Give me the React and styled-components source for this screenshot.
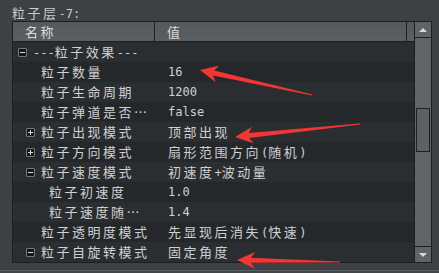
import React from "react";
import styled, { createGlobalStyle } from "styled-components";

const Global = createGlobalStyle`
  html, body { margin: 0; padding: 0; background: #3e4144; }
  body { width: 439px; height: 273px; overflow: hidden; }
`;

const Frame = styled.div`
  position: relative;
  width: 439px;
  height: 273px;
  box-sizing: border-box;
  background: #3e4144;
  padding: 4px 7px 0 12px;
  display: flex;
  flex-direction: column;
  font-family: "DejaVu Sans Mono", "Noto Sans CJK SC", monospace;
  color: #d0d0d0;
  overflow: hidden;
`;

const Title = styled.div`
  height: 17px;
  line-height: 18px;
  font-size: 12px;
  color: #c8cacb;
`;

const Panel = styled.div`
  display: grid;
  grid-template-columns: 1fr 17px;
  height: 242px;
  border: 1px solid #1d1f21;
  box-sizing: border-box;
  background: #2a2d2f;
`;

const Tree = styled.div`
  display: flex;
  flex-direction: column;
  min-width: 0;
`;

const Header = styled.div`
  display: grid;
  grid-template-columns: 142px 1fr 7px;
  height: 20px;
  box-sizing: border-box;
  border-bottom: 1px solid #1d1f21;
  background: linear-gradient(#55595c, #5b5f62);
`;

const HeadCell = styled.div`
  box-sizing: border-box;
  padding-left: ${(p) => p.$pad}px;
  border-right: ${(p) => (p.$last ? "none" : "1px solid #1d1f21")};
  line-height: 19px;
  font-size: 12px;
  color: #dadbdc;
`;

const Rows = styled.div`
  display: flex;
  flex-direction: column;
`;

const Row = styled.div`
  display: grid;
  grid-template-columns: 142px 1fr;
  height: 20px;
  line-height: 20px;
  font-size: 12px;
  white-space: nowrap;
  &:nth-child(odd) { background: #2b2e30; }
  &:nth-child(even) { background: #25282a; }
`;

const NameCell = styled.div`
  display: flex;
  align-items: center;
  padding-left: ${(p) => 5 + p.$level * 8}px;
  overflow: hidden;
`;

const BoxSlot = styled.span`
  flex: 0 0 15px;
  height: 20px;
  display: flex;
  align-items: center;
`;

const ExpandBox = styled.span`
  position: relative;
  width: 9px;
  height: 9px;
  box-sizing: border-box;
  border: 1px solid #74787b;
  border-radius: 1px;
  background: #141618;
  &::before {
    content: "";
    position: absolute;
    left: 1px;
    right: 1px;
    top: 3px;
    height: 1px;
    background: #d6d6d6;
  }
  &::after {
    content: "";
    display: ${(p) => (p.$open ? "none" : "block")};
    position: absolute;
    top: 1px;
    bottom: 1px;
    left: 3px;
    width: 1px;
    background: #d6d6d6;
  }
`;

const ValueCell = styled.div`
  padding-left: 13px;
  overflow: hidden;
`;

const Cjk = styled.span`
  font-family: "Noto Sans CJK SC", sans-serif;
  font-size: 13px;
  letter-spacing: 2.5px;
`;

const Latin = styled.span`
  font-family: "DejaVu Sans Mono", monospace;
  font-size: 12px;
`;

const Scrollbar = styled.div`
  display: flex;
  flex-direction: column;
  border-left: 1px solid #1d1f21;
  background: #5f6467;
`;

const ScrollButton = styled.div`
  height: 15px;
  flex: 0 0 15px;
  display: flex;
  align-items: center;
  justify-content: center;
  background: #5f6467;
  border-top: ${(p) => (p.$down ? "1px solid #1d1f21" : "none")};
  border-bottom: ${(p) => (p.$down ? "none" : "1px solid #1d1f21")};
`;

const Triangle = styled.span`
  width: 0;
  height: 0;
  border-left: 4px solid transparent;
  border-right: 4px solid transparent;
  ${(p) =>
    p.$down
      ? "border-top: 4px solid #d8d8d8;"
      : "border-bottom: 4px solid #d8d8d8;"}
`;

const Track = styled.div`
  flex: 1;
  padding: 70px 1px 0 1px;
`;

const Thumb = styled.div`
  height: 44px;
  box-sizing: border-box;
  border: 1px solid #1d1f21;
  background: #5c6164;
`;

const Footer = styled.div`
  margin: 7px -7px 0 -12px;
  flex: 1;
  border-top: 1px solid #5a5e61;
  background: #424548;
`;

const Overlay = styled.svg`
  position: absolute;
  left: 0;
  top: 0;
  pointer-events: none;
`;

const isCjk = (ch) => /[\u2026\u3000-\u9fff\uff00-\uffef]/.test(ch);

function Mixed({ text }) {
  const parts = [];
  let cur = "";
  let curCjk = null;
  for (const ch of text) {
    const c = isCjk(ch);
    if (curCjk === null || c === curCjk) {
      cur += ch;
    } else {
      parts.push([curCjk, cur]);
      cur = ch;
    }
    curCjk = c;
  }
  if (cur) parts.push([curCjk, cur]);
  return parts.map(([c, s], i) =>
    c ? <Cjk key={i}>{s}</Cjk> : <Latin key={i}>{s}</Latin>
  );
}

const rows = [
  { name: "---粒子效果---", value: "", level: 0, box: "open" },
  { name: "粒子数量", value: "16", level: 1 },
  { name: "粒子生命周期", value: "1200", level: 1 },
  { name: "粒子弹道是否…", value: "false", level: 1 },
  { name: "粒子出现模式", value: "顶部出现", level: 1, box: "closed" },
  { name: "粒子方向模式", value: "扇形范围方向(随机)", level: 1, box: "closed" },
  { name: "粒子速度模式", value: "初速度+波动量", level: 1, box: "open" },
  { name: "粒子初速度", value: "1.0", level: 2 },
  { name: "粒子速度随…", value: "1.4", level: 2 },
  { name: "粒子透明度模式", value: "先显现后消失(快速)", level: 1 },
  { name: "粒子自旋转模式", value: "固定角度", level: 1, box: "open" },
];

function arrowPoints(tx, ty, sx, sy) {
  const dx = tx - sx;
  const dy = ty - sy;
  const len = Math.hypot(dx, dy);
  const ux = dx / len;
  const uy = dy / len;
  const nx = -uy;
  const ny = ux;
  const headLen = 18;
  const headW = 8.5;
  const bx = tx - ux * headLen;
  const by = ty - uy * headLen;
  const nbx = tx - ux * (headLen - 4);
  const nby = ty - uy * (headLen - 4);
  const pts = [
    [sx + nx * 0.5, sy + ny * 0.5],
    [nbx + nx * 2.5, nby + ny * 2.5],
    [bx + nx * headW, by + ny * headW],
    [tx, ty],
    [bx - nx * headW, by - ny * headW],
    [nbx - nx * 2.5, nby - ny * 2.5],
    [sx - nx * 0.5, sy - ny * 0.5],
  ];
  return pts.map((p) => p.map((v) => v.toFixed(1)).join(",")).join(" ");
}

const arrows = [
  [200, 70, 312, 95],
  [235, 137, 360, 124],
  [237, 260, 340, 262],
];

export default function App() {
  return (
    <>
      <Global />
      <Frame>
        <Title>
          <Mixed text="粒子层-7:" />
        </Title>
        <Panel>
          <Tree>
            <Header>
              <HeadCell $pad={12}>
                <Mixed text="名称" />
              </HeadCell>
              <HeadCell $pad={12}>
                <Mixed text="值" />
              </HeadCell>
              <HeadCell $last />
            </Header>
            <Rows>
              {rows.map((r, i) => (
                <Row key={i}>
                  <NameCell $level={r.level}>
                    <BoxSlot>
                      {r.box && <ExpandBox $open={r.box === "open"} />}
                    </BoxSlot>
                    <span>
                      <Mixed text={r.name} />
                    </span>
                  </NameCell>
                  <ValueCell>
                    <Mixed text={r.value} />
                  </ValueCell>
                </Row>
              ))}
            </Rows>
          </Tree>
          <Scrollbar>
            <ScrollButton>
              <Triangle />
            </ScrollButton>
            <Track>
              <Thumb />
            </Track>
            <ScrollButton $down>
              <Triangle $down />
            </ScrollButton>
          </Scrollbar>
        </Panel>
        <Footer />
        <Overlay width="439" height="273" viewBox="0 0 439 273">
          {arrows.map((a, i) => (
            <polygon key={i} points={arrowPoints(...a)} fill="#f23535" />
          ))}
        </Overlay>
      </Frame>
    </>
  );
}
